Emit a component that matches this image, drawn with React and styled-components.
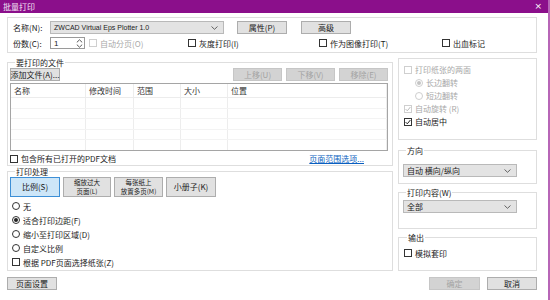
import React from 'react'
import styled, { createGlobalStyle, css } from 'styled-components'

const GlobalStyle = createGlobalStyle`
  html, body {
    margin: 0;
    padding: 0;
    background: #fff;
  }
  body {
    font-family: "Noto Sans CJK SC", "Liberation Sans", sans-serif;
    font-size: 8px;
    color: #1a1a1a;
  }
  * {
    box-sizing: border-box;
  }
`

const Window = styled.div`
  width: 550px;
  height: 300px;
  display: flex;
  flex-direction: column;
  border-right: 2px solid #b766b7;
  background: #fff;
  overflow: hidden;
`

const TitleBar = styled.div`
  height: 13px;
  flex: none;
  display: flex;
  align-items: center;
  justify-content: space-between;
  padding: 0 6px 0 3px;
  background: #8b0f8b;
  color: #f4e4f4;
  font-size: 8px;
  line-height: 13px;
`

const Close = styled.span`
  font-family: "DejaVu Sans", sans-serif;
  font-size: 9px;
  color: #fff;
`

const Body = styled.div`
  flex: 1;
  display: flex;
  flex-direction: column;
  padding: 4px 11px 0 7px;
`

const Box = styled.div`
  display: flex;
  flex-direction: column;
  flex: none;
  border: 1px solid #dedede;
  height: ${({ $h }) => $h}px;
  margin-top: ${({ $mt }) => $mt || 0}px;
  padding: ${({ $pad }) => $pad || '0 4px'};
`

const Legend = styled.div`
  align-self: flex-start;
  margin: -5px 0 0 3px;
  padding: 0 1px;
  line-height: 10px;
  background: #fff;
  color: #1a1a1a;
`

const Row = styled.div`
  display: flex;
  align-items: center;
  height: ${({ $h }) => $h || 13}px;
  margin-top: ${({ $mt }) => $mt || 0}px;
  ${({ $indent }) => $indent && css`padding-left: ${$indent}px;`}
`

const OptionsRow = styled.div`
  display: grid;
  grid-template-columns: 37px 39px 99px 131px 123px 1fr;
  align-items: center;
  height: 12px;
  margin-top: 3px;
`

const Label = styled.span`
  width: ${({ $w }) => ($w ? `${$w}px` : 'auto')};
  flex: none;
  white-space: nowrap;
`

const Button = styled.div`
  display: flex;
  flex-direction: column;
  align-items: center;
  justify-content: center;
  flex: none;
  width: ${({ $w }) => $w || 50}px;
  height: ${({ $h }) => $h || 13}px;
  margin-left: ${({ $ml }) => $ml || 0}px;
  background: #e1e1e1;
  border: 1px solid #adadad;
  color: #1a1a1a;
  white-space: nowrap;
  text-align: center;
  line-height: 8px;

  ${({ $disabled }) =>
    $disabled &&
    css`
      background: #d3d3d3;
      border-color: #c6c6c6;
      color: #a3a3a3;
    `}

  ${({ $active }) =>
    $active &&
    css`
      background: #cde6f8;
      border-color: #3d8fd6;
    `}
`

const Line = styled.span`
  display: block;
  font-size: 6.5px;
  line-height: 9.5px;
  height: 9px;
`

const Select = styled.div`
  display: flex;
  align-items: center;
  justify-content: space-between;
  flex: none;
  width: ${({ $w }) => $w}px;
  height: 13px;
  padding: 0 5px 0 3px;
  background: #e3e3e3;
  border: 1px solid #b9b9b9;
  white-space: nowrap;
`

const PrinterName = styled.span`
  font-family: "Liberation Sans", sans-serif;
  font-size: 7px;
  color: #222;
`

const Spinner = styled.div`
  display: flex;
  align-items: center;
  justify-content: space-between;
  width: 35px;
  height: 12px;
  padding: 0 1px 0 3px;
  border: 1px solid #9a9a9a;
  background: #fff;
  font-family: "Liberation Sans", sans-serif;
`

const SpinArrows = styled.span`
  display: flex;
  flex-direction: column;
  gap: 1px;
`

const CheckRow = styled.span`
  display: inline-flex;
  align-items: center;
  gap: 3px;
  white-space: nowrap;
  color: ${({ $disabled }) => ($disabled ? '#a8a8a8' : '#1a1a1a')};
`

const CheckBox = styled.span`
  display: inline-flex;
  align-items: center;
  justify-content: center;
  width: 8px;
  height: 8px;
  flex: none;
  border: 1px solid ${({ $disabled }) => ($disabled ? '#cfcfcf' : '#333')};
  background: #fff;
`

const RadioDot = styled.span`
  display: inline-flex;
  align-items: center;
  justify-content: center;
  width: 8px;
  height: 8px;
  flex: none;
  border-radius: 50%;
  border: 1px solid ${({ $disabled }) => ($disabled ? '#cfcfcf' : '#333')};
  background: #fff;

  &::after {
    content: '';
    display: ${({ $checked }) => ($checked ? 'block' : 'none')};
    width: 4px;
    height: 4px;
    border-radius: 50%;
    background: ${({ $disabled }) => ($disabled ? '#c4c4c4' : '#222')};
  }
`

const Main = styled.div`
  display: grid;
  grid-template-columns: 386px 139px;
  column-gap: 5px;
  margin-top: 5px;
`

const Column = styled.div`
  display: flex;
  flex-direction: column;
  padding-top: ${({ $pt }) => $pt || 0}px;
`

const ButtonBar = styled.div`
  display: flex;
  align-items: center;
  height: 13px;
  margin-left: -2px;
`

const Spacer = styled.div`
  flex: 1;
`

const Table = styled.div`
  display: flex;
  flex-direction: column;
  width: 378px;
  height: 68px;
  margin: 2px 0 0 -2px;
  border: 1px solid #a5a5a5;
  background: #fff;
  overflow: hidden;
`

const TableRow = styled.div`
  display: grid;
  grid-template-columns: 75px 48px 47px 47px 1fr;
  height: ${({ $header }) => ($header ? 14 : 10.5)}px;
  flex: none;
  border-bottom: 1px solid ${({ $header }) => ($header ? '#ececec' : '#f3f3f3')};
`

const Cell = styled.div`
  display: flex;
  align-items: center;
  padding-left: 3px;
  border-right: 1px solid #ededed;
  color: #333;
`

const FileFooter = styled.div`
  display: flex;
  align-items: center;
  height: 13px;
  margin: 1px 0 0 -2px;
`

const Link = styled.span`
  margin-left: auto;
  margin-right: 24px;
  color: #0a5fc0;
  text-decoration: underline;
`

const ModeBar = styled.div`
  display: flex;
  gap: 3px;
  margin: 0 0 0 -2px;
`

const RadioList = styled.div`
  display: flex;
  flex-direction: column;
  margin-top: 2px;
`

const Footer = styled.div`
  display: flex;
  justify-content: space-between;
  align-items: center;
  margin-top: 6px;
`

const FooterRight = styled.div`
  display: flex;
  gap: 7px;
`

const Chevron = () => (
  <svg width="7" height="4" viewBox="0 0 7 4">
    <path d="M0.5 0.5 L3.5 3.3 L6.5 0.5" fill="none" stroke="#555" strokeWidth="0.9" />
  </svg>
)

const Tick = ({ color }) => (
  <svg width="6" height="6" viewBox="0 0 6 6">
    <path d="M0.6 3.1 L2.3 4.8 L5.4 1" fill="none" stroke={color} strokeWidth="1" />
  </svg>
)

const Check = ({ label, checked, disabled }) => (
  <CheckRow $disabled={disabled}>
    <CheckBox $disabled={disabled}>{checked && <Tick color={disabled ? '#bbb' : '#222'} />}</CheckBox>
    {label}
  </CheckRow>
)

const Radio = ({ label, checked, disabled }) => (
  <CheckRow $disabled={disabled}>
    <RadioDot $checked={checked} $disabled={disabled} />
    {label}
  </CheckRow>
)

const columns = ['名称', '修改时间', '范围', '大小', '位置']

export default function App() {
  return (
    <>
      <GlobalStyle />
      <Window>
        <TitleBar>
          <span>批量打印</span>
          <Close>×</Close>
        </TitleBar>
        <Body>
          <Box $h={36} $mt={0} $pad="3px 4px 0 5px">
            <Row>
              <Label $w={37}>名称(N):</Label>
              <Select $w={174}>
                <PrinterName>ZWCAD Virtual Eps Plotter 1.0</PrinterName>
                <Chevron />
              </Select>
              <Button $ml={13}>属性(P)</Button>
              <Button $ml={14}>高级</Button>
            </Row>
            <OptionsRow>
              <Label>份数(C):</Label>
              <Spinner>
                1
                <SpinArrows>
                  <svg width="7" height="4" viewBox="0 0 7 4">
                    <path d="M0.8 3.4 L3.5 0.8 L6.2 3.4" fill="none" stroke="#444" strokeWidth="0.9" />
                  </svg>
                  <svg width="7" height="4" viewBox="0 0 7 4">
                    <path d="M0.8 0.6 L3.5 3.2 L6.2 0.6" fill="none" stroke="#444" strokeWidth="0.9" />
                  </svg>
                </SpinArrows>
              </Spinner>
              <Check label="自动分页(O)" disabled />
              <Check label="灰度打印(I)" />
              <Check label="作为图像打印(T)" />
              <Check label="出血标记" />
            </OptionsRow>
          </Box>

          <Main>
            <Column $pt={4}>
              <Box $h={104} $pad="0 4px">
                <Legend>要打印的文件</Legend>
                <ButtonBar>
                  <Button $w={50}>添加文件(A)...</Button>
                  <Spacer />
                  <Button $w={49} $disabled>上移(U)</Button>
                  <Button $w={49} $ml={4} $disabled>下移(V)</Button>
                  <Button $w={49} $ml={4} $disabled>移除(E)</Button>
                </ButtonBar>
                <Table>
                  <TableRow $header>
                    {columns.map(c => (
                      <Cell key={c}>{c}</Cell>
                    ))}
                  </TableRow>
                  {[0, 1, 2, 3, 4].map(r => (
                    <TableRow key={r}>
                      {columns.map(c => (
                        <Cell key={c} />
                      ))}
                    </TableRow>
                  ))}
                </Table>
                <FileFooter>
                  <Check label="包含所有已打开的PDF文档" />
                  <Link>页面范围选项...</Link>
                </FileFooter>
              </Box>

              <Box $h={100} $mt={5} $pad="0 4px">
                <Legend>打印处理</Legend>
                <ModeBar>
                  <Button $w={50} $h={20} $active>比例(S)</Button>
                  <Button $w={48} $h={20}>
                    <Line>缩放过大</Line>
                    <Line>页面(L)</Line>
                  </Button>
                  <Button $w={49} $h={20}>
                    <Line>每张纸上</Line>
                    <Line>放置多页(M)</Line>
                  </Button>
                  <Button $w={50} $h={20}>小册子(K)</Button>
                </ModeBar>
                <RadioList>
                  <Row $h={14}>
                    <Radio label="无" />
                  </Row>
                  <Row $h={14}>
                    <Radio label="适合打印边距(F)" checked />
                  </Row>
                  <Row $h={14}>
                    <Radio label="缩小至打印区域(D)" />
                  </Row>
                  <Row $h={14}>
                    <Radio label="自定义比例" />
                  </Row>
                  <Row $h={14}>
                    <Check label="根据 PDF页面选择纸张(Z)" />
                  </Row>
                </RadioList>
              </Box>
            </Column>

            <Column>
              <Box $h={82} $pad="4px 5px">
                <Row>
                  <Check label="打印纸张的两面" disabled />
                </Row>
                <Row $indent={11}>
                  <Radio label="长边翻转" checked disabled />
                </Row>
                <Row $indent={11}>
                  <Radio label="短边翻转" disabled />
                </Row>
                <Row>
                  <Check label="自动旋转 (R)" checked disabled />
                </Row>
                <Row>
                  <Check label="自动居中" checked />
                </Row>
              </Box>

              <Box $h={34} $mt={10} $pad="0 4px">
                <Legend>方向</Legend>
                <Row $mt={8}>
                  <Select $w={114}>
                    <span>自动 横向/纵向</span>
                    <Chevron />
                  </Select>
                </Row>
              </Box>

              <Box $h={37} $mt={8} $pad="0 4px">
                <Legend>打印内容(W)</Legend>
                <Row $mt={2}>
                  <Select $w={114}>
                    <span>全部</span>
                    <Chevron />
                  </Select>
                </Row>
              </Box>

              <Box $h={34} $mt={8} $pad="0 5px">
                <Legend>输出</Legend>
                <Row $h={12} $mt={4}>
                  <Check label="模拟套印" />
                </Row>
              </Box>
            </Column>
          </Main>

          <Footer>
            <Button $w={50}>页面设置</Button>
            <FooterRight>
              <Button $w={51} $disabled>确定</Button>
              <Button $w={50}>取消</Button>
            </FooterRight>
          </Footer>
        </Body>
      </Window>
    </>
  )
}
